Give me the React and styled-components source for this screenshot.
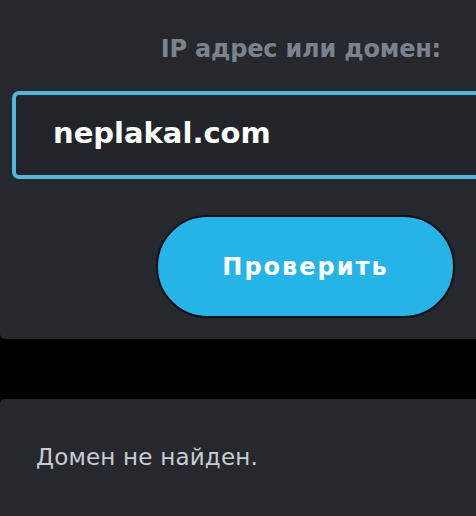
import styled, { createGlobalStyle } from "styled-components";

const GlobalStyle = createGlobalStyle`
    html, body {
        margin: 0;
        background: #000;
        overflow: hidden;
    }
    body {
        font-family: "DejaVu Sans", "Noto Sans", sans-serif;
    }
`;

const colors = {
    panel: "#25282d",
    field: "#222429",
    accent: "#26b4e6",
    fieldBorder: "#52b7e0",
    label: "#7a828e",
    result: "#c9ccd1",
};

export default function App() {
    return (
        <Page>
            <GlobalStyle />
            <CheckForm onSubmit={(e) => e.preventDefault()}>
                <Label htmlFor="host">IP адрес или домен:</Label>
                <Field id="host" defaultValue="neplakal.com" />
                <Submit type="submit">Проверить</Submit>
            </CheckForm>
            <ResultCard>
                <ResultText>Домен не найден.</ResultText>
            </ResultCard>
        </Page>
    );
}

const Page = styled.div`
    display: flex;
    flex-direction: column;
    gap: 60px;
    width: 476px;
    height: 516px;
`;

const CheckForm = styled.form`
    display: flex;
    flex-direction: column;
    height: 339px;
    box-sizing: border-box;
    padding: 32px 0 0 12px;
    background: ${colors.panel};
    border-bottom-left-radius: 5px;
`;

const Label = styled.label`
    align-self: flex-end;
    margin-right: 35px;
    font-size: 24px;
    font-weight: 600;
    letter-spacing: -0.2px;
    line-height: 34px;
    color: ${colors.label};
`;

const Field = styled.input`
    margin-top: 25px;
    margin-right: -20px;
    height: 88px;
    box-sizing: border-box;
    padding: 0 0 4px 37px;
    background: ${colors.field};
    border: 4px solid ${colors.fieldBorder};
    border-radius: 7px;
    outline: none;
    font-family: inherit;
    font-size: 29px;
    font-weight: 600;
    color: #fff;
`;

const Submit = styled.button`
    align-self: flex-end;
    margin: 36px 21px 0 0;
    width: 299px;
    height: 103px;
    background: ${colors.accent};
    border: 2px solid #0d1117;
    border-radius: 52px;
    font-family: inherit;
    font-size: 24px;
    font-weight: 700;
    letter-spacing: 2px;
    color: #fff;
    cursor: pointer;
`;

const ResultCard = styled.div`
    flex: 1;
    display: flex;
    align-items: flex-start;
    padding: 43px 0 0 36px;
    background: ${colors.panel};
    border-top-left-radius: 5px;
`;

const ResultText = styled.p`
    margin: 0;
    font-size: 23px;
    letter-spacing: 0.2px;
    line-height: 30px;
    color: ${colors.result};
`;
